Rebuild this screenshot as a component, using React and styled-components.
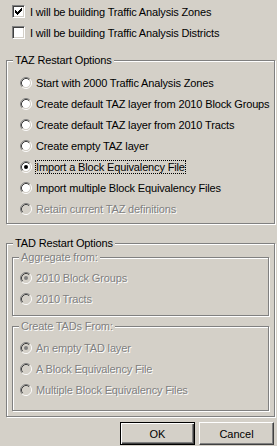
import React from 'react'
import styled, { createGlobalStyle } from 'styled-components'

const GlobalStyle = createGlobalStyle`
    html, body {
        margin: 0;
        background: #d4d0c8;
    }
    #root {
        width: 277px;
        height: 446px;
        overflow: hidden;
    }
`

const Dialog = styled.div`
    padding-top: 1px;
    font-family: "Liberation Sans", Arial, sans-serif;
    font-size: 11px;
    letter-spacing: -0.15px;
    color: #000;
    background: #d4d0c8;
`

const CheckList = styled.div`
    padding-left: 12px;
`

const CheckRow = styled.div`
    display: flex;
    align-items: center;
    gap: 5px;
    height: 21px;
`

const CheckBox = styled.span`
    box-sizing: border-box;
    flex-shrink: 0;
    width: 13px;
    height: 13px;
    display: flex;
    align-items: center;
    justify-content: center;
    background: #fff;
    border-top: 1px solid #808080;
    border-left: 1px solid #808080;
    border-bottom: 1px solid #fff;
    border-right: 1px solid #fff;
    box-shadow: inset 1px 1px 0 #404040, inset -1px -1px 0 #d4d0c8;
`

const Group = styled.div`
    border: 1px solid #808080;
    box-shadow: inset 1px 1px 0 #fff, 1px 1px 0 #fff;
    margin: ${p => p.$margin};
    padding: ${p => p.$padding};
`

const Legend = styled.div`
    display: table;
    margin: -7px 0 0 6px;
    padding: 0 2px;
    height: 13px;
    line-height: 13px;
    background: #d4d0c8;
    color: ${p => (p.$disabled ? '#808080' : '#000')};
    text-shadow: ${p => (p.$disabled ? '1px 1px 0 #fff' : 'none')};
`

const Options = styled.div`
    padding: ${p => p.$padding};
`

const RadioRow = styled.div`
    display: flex;
    align-items: center;
    gap: 4px;
    height: 21px;

    svg {
        flex-shrink: 0;
    }
`

const Label = styled.span`
    line-height: 12px;
    white-space: nowrap;
    color: ${p => (p.$disabled ? '#808080' : '#000')};
    text-shadow: ${p => (p.$disabled ? '1px 1px 0 #fff' : 'none')};
    outline: ${p => (p.$focused ? '1px dotted #000' : 'none')};
`

const ButtonBar = styled.div`
    display: flex;
    justify-content: flex-end;
    gap: 4px;
    margin-top: 5px;
    padding-right: 3px;
`

const Button = styled.button`
    box-sizing: border-box;
    width: 75px;
    height: 23px;
    padding: 0;
    font-family: "Liberation Sans", Arial, sans-serif;
    font-size: 11px;
    color: #000;
    background: #d4d0c8;
    border: 1px solid;
    border-color: ${p => (p.$default ? '#000' : '#fff #404040 #404040 #fff')};
    box-shadow: ${p =>
        p.$default
            ? 'inset 1px 1px 0 #fff, inset -1px -1px 0 #404040, inset -2px -2px 0 #808080'
            : 'inset -1px -1px 0 #808080'};
`

function CheckMark() {
    return (
        <svg width="7" height="7" viewBox="0 0 7 7" shapeRendering="crispEdges">
            <path
                d="M6 0h1v1h-1z M5 1h2v1h-2z M0 2h1v1h-1z M4 2h3v1h-3z M0 3h2v1h-2z M3 3h3v1h-3z M0 4h5v1h-5z M1 5h3v1h-3z M2 6h1v1h-1z"
                fill="#000"
            />
        </svg>
    )
}

function RadioIcon({ checked, disabled }) {
    return (
        <svg width="12" height="12" viewBox="0 0 12 12">
            <circle cx="6" cy="6" r="4.2" fill={disabled ? '#d4d0c8' : '#fff'} />
            <path d="M2.11 9.89 A5.5 5.5 0 0 1 9.89 2.11" fill="none" stroke="#808080" />
            <path d="M9.89 2.11 A5.5 5.5 0 0 1 2.11 9.89" fill="none" stroke="#fff" />
            <path d="M2.82 9.18 A4.5 4.5 0 0 1 9.18 2.82" fill="none" stroke="#404040" />
            <path d="M9.18 2.82 A4.5 4.5 0 0 1 2.82 9.18" fill="none" stroke="#d4d0c8" />
            {checked && <circle cx="6" cy="6" r="2" fill={disabled ? '#808080' : '#000'} />}
        </svg>
    )
}

function Radio({ label, checked, disabled, focused }) {
    return (
        <RadioRow>
            <RadioIcon checked={checked} disabled={disabled} />
            <Label $disabled={disabled} $focused={focused}>{label}</Label>
        </RadioRow>
    )
}

const tazOptions = [
    { label: 'Start with 2000 Traffic Analysis Zones' },
    { label: 'Create default TAZ layer from 2010 Block Groups' },
    { label: 'Create default TAZ layer from 2010 Tracts' },
    { label: 'Create empty TAZ layer' },
    { label: 'Import a Block Equivalency File', checked: true, focused: true },
    { label: 'Import multiple Block Equivalency Files' },
    { label: 'Retain current TAZ definitions', disabled: true },
]

export default function App() {
    return (
        <Dialog>
            <GlobalStyle />
            <CheckList>
                <CheckRow>
                    <CheckBox><CheckMark /></CheckBox>
                    <Label>I will be building Traffic Analysis Zones</Label>
                </CheckRow>
                <CheckRow>
                    <CheckBox />
                    <Label>I will be building Traffic Analysis Districts</Label>
                </CheckRow>
            </CheckList>

            <Group $margin="17px 2px 0 6px" $padding="0">
                <Legend>TAZ Restart Options</Legend>
                <Options $padding="5px 0 4px 13px">
                    {tazOptions.map(o => (
                        <Radio key={o.label} {...o} />
                    ))}
                </Options>
            </Group>

            <Group $margin="19px 2px 0 6px" $padding="0 0 5px 0">
                <Legend>TAD Restart Options</Legend>
                <Group $margin="7px 5px 0 5px" $padding="0">
                    <Legend $disabled>Aggregate from:</Legend>
                    <Options $padding="3px 0 6px 7px">
                        <Radio label="2010 Block Groups" checked disabled />
                        <Radio label="2010 Tracts" disabled />
                    </Options>
                </Group>
                <Group $margin="10px 5px 0 5px" $padding="0">
                    <Legend $disabled>Create TADs From:</Legend>
                    <Options $padding="4px 0 10px 7px">
                        <Radio label="An empty TAD layer" checked disabled />
                        <Radio label="A Block Equivalency File" disabled />
                        <Radio label="Multiple Block Equivalency Files" disabled />
                    </Options>
                </Group>
            </Group>

            <ButtonBar>
                <Button $default>OK</Button>
                <Button>Cancel</Button>
            </ButtonBar>
        </Dialog>
    )
}
